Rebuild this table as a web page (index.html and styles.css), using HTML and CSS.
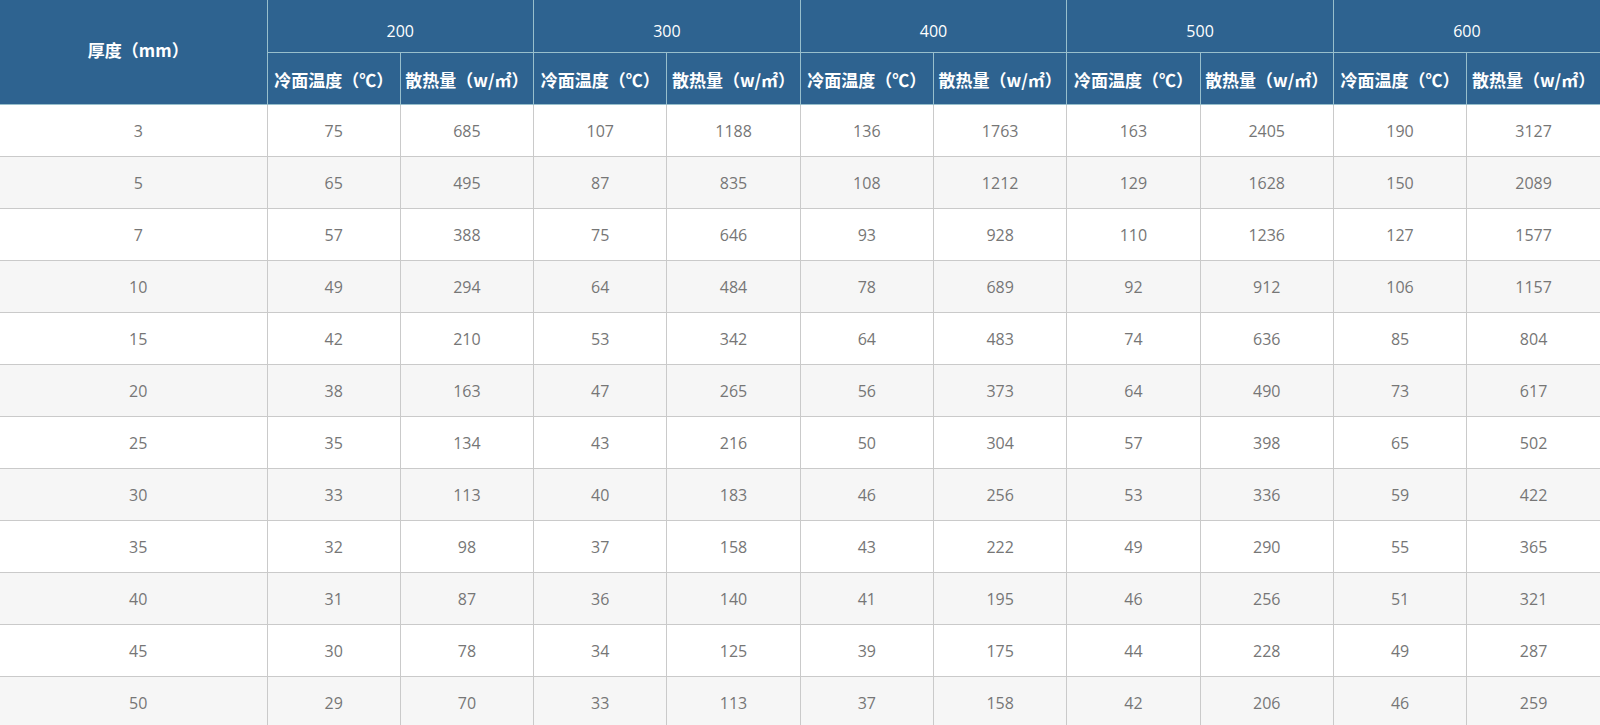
FILE: index.html
```html
<!DOCTYPE html>
<html lang="zh-CN">
<head>
<meta charset="utf-8">
<title>厚度散热量表</title>
<link rel="stylesheet" href="styles.css">
</head>
<body>
<table class="heat-table">
  <colgroup>
    <col class="col-first">
    <col><col><col><col><col><col><col><col><col><col>
  </colgroup>
  <thead>
    <tr class="head-top">
      <th rowspan="2" class="th-main">厚度（mm）</th>
      <th colspan="2" class="th-group">200</th>
      <th colspan="2" class="th-group">300</th>
      <th colspan="2" class="th-group">400</th>
      <th colspan="2" class="th-group">500</th>
      <th colspan="2" class="th-group">600</th>
    </tr>
    <tr class="head-sub">
      <th>冷面温度（℃）</th><th>散热量（w/㎡）</th>
      <th>冷面温度（℃）</th><th>散热量（w/㎡）</th>
      <th>冷面温度（℃）</th><th>散热量（w/㎡）</th>
      <th>冷面温度（℃）</th><th>散热量（w/㎡）</th>
      <th>冷面温度（℃）</th><th>散热量（w/㎡）</th>
    </tr>
  </thead>
  <tbody>
    <tr><td>3</td><td>75</td><td>685</td><td>107</td><td>1188</td><td>136</td><td>1763</td><td>163</td><td>2405</td><td>190</td><td>3127</td></tr>
    <tr><td>5</td><td>65</td><td>495</td><td>87</td><td>835</td><td>108</td><td>1212</td><td>129</td><td>1628</td><td>150</td><td>2089</td></tr>
    <tr><td>7</td><td>57</td><td>388</td><td>75</td><td>646</td><td>93</td><td>928</td><td>110</td><td>1236</td><td>127</td><td>1577</td></tr>
    <tr><td>10</td><td>49</td><td>294</td><td>64</td><td>484</td><td>78</td><td>689</td><td>92</td><td>912</td><td>106</td><td>1157</td></tr>
    <tr><td>15</td><td>42</td><td>210</td><td>53</td><td>342</td><td>64</td><td>483</td><td>74</td><td>636</td><td>85</td><td>804</td></tr>
    <tr><td>20</td><td>38</td><td>163</td><td>47</td><td>265</td><td>56</td><td>373</td><td>64</td><td>490</td><td>73</td><td>617</td></tr>
    <tr><td>25</td><td>35</td><td>134</td><td>43</td><td>216</td><td>50</td><td>304</td><td>57</td><td>398</td><td>65</td><td>502</td></tr>
    <tr><td>30</td><td>33</td><td>113</td><td>40</td><td>183</td><td>46</td><td>256</td><td>53</td><td>336</td><td>59</td><td>422</td></tr>
    <tr><td>35</td><td>32</td><td>98</td><td>37</td><td>158</td><td>43</td><td>222</td><td>49</td><td>290</td><td>55</td><td>365</td></tr>
    <tr><td>40</td><td>31</td><td>87</td><td>36</td><td>140</td><td>41</td><td>195</td><td>46</td><td>256</td><td>51</td><td>321</td></tr>
    <tr><td>45</td><td>30</td><td>78</td><td>34</td><td>125</td><td>39</td><td>175</td><td>44</td><td>228</td><td>49</td><td>287</td></tr>
    <tr><td>50</td><td>29</td><td>70</td><td>33</td><td>113</td><td>37</td><td>158</td><td>42</td><td>206</td><td>46</td><td>259</td></tr>
  </tbody>
</table>
</body>
</html>
```

FILE: styles.css
```css
html, body {
  margin: 0;
  padding: 0;
  background: #ffffff;
}

body {
  font-family: "Open Sans", "Noto Sans CJK SC", sans-serif;
  overflow: hidden;
}

.heat-table {
  width: 1600px;
  border-collapse: collapse;
  table-layout: fixed;
}

.col-first {
  width: 267px;
}

.heat-table th {
  background: #2e6390;
  color: #ffffff;
  font-weight: normal;
  font-size: 16px;
  text-align: center;
  padding: 0;
  border: 1px solid #98bfcc;
  white-space: nowrap;
}

.heat-table thead tr:first-child th {
  border-top: none;
}

.heat-table th:first-child {
  border-left: none;
}

.heat-table .th-main {
  font-family: "Noto Sans CJK SC", sans-serif;
  font-weight: bold;
  font-size: 17px;
  padding: 0 0 6px 10px;
}

.head-top .th-group {
  padding-top: 10px;
  height: 42px;
}

.head-sub th {
  height: 49px;
  font-family: "Noto Sans CJK SC", sans-serif;
  font-weight: bold;
  font-size: 17px;
  padding-top: 2px;
}

.heat-table tr > :last-child {
  border-right: none;
}

.heat-table td {
  height: 51px;
  padding: 0;
  text-align: center;
  font-size: 16px;
  color: #767676;
  border: 1px solid #cacaca;
}

.heat-table td:first-child {
  border-left: none;
  padding-left: 10px;
}

.heat-table tbody tr:nth-child(even) td {
  background: #f6f6f6;
}

.heat-table tbody tr:last-child td {
  border-bottom: 1px solid #cacaca;
}
```
